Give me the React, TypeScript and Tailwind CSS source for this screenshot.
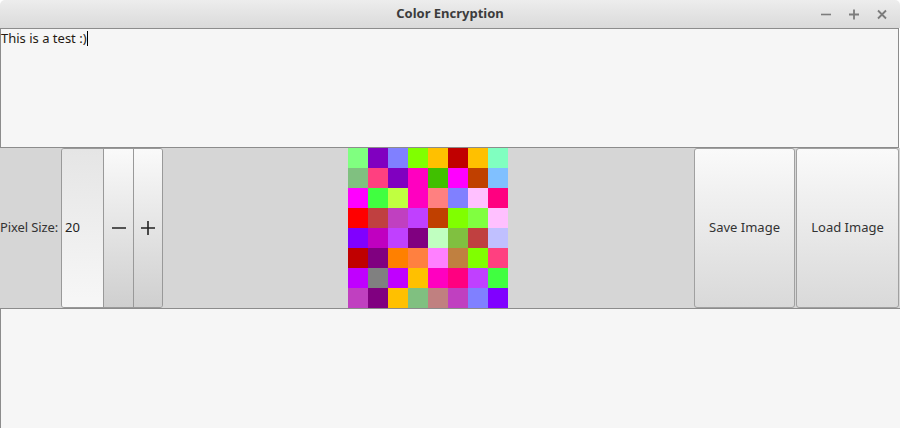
import React from "react";

const grid = [
  ["#80ff80", "#8000c0", "#8080ff", "#80ff00", "#ffc000", "#c00000", "#ffc000", "#80ffc0"],
  ["#80c080", "#ff4080", "#8000c0", "#ff00c0", "#40c000", "#ff00ff", "#c04000", "#80c0ff"],
  ["#ff00ff", "#40ff40", "#c0ff40", "#ff00c0", "#ff8080", "#8080ff", "#ffc0ff", "#ff0080"],
  ["#ff0000", "#c04040", "#c040c0", "#c040ff", "#c04000", "#80ff00", "#80ff40", "#ffc0ff"],
  ["#8000ff", "#c000c0", "#c040ff", "#800080", "#c0ffc0", "#80c040", "#c04040", "#c0c0ff"],
  ["#c00000", "#800080", "#ff8000", "#ff8040", "#ff80ff", "#c08040", "#80ff00", "#ff4080"],
  ["#c000ff", "#808080", "#c000ff", "#ffc000", "#ff00c0", "#ff0080", "#c040ff", "#40ff40"],
  ["#c040c0", "#800080", "#ffc000", "#80c080", "#c08080", "#c040c0", "#8080ff", "#8000ff"],
];

function TitleBar() {
  return <div className="relative h-[28px] shrink-0 rounded-t-[5px] bg-gradient-to-b from-[#ededed] to-[#dadada] flex items-center justify-center">
      <span className="text-[13px] font-bold text-[#3c3c3c]">Color Encryption</span>
      <div className="absolute right-[12px] top-0 h-full flex items-center gap-[16px] text-[#7c7c7c]">
        <svg width="12" height="12" viewBox="0 0 12 12"><path d="M1 6.5h10" stroke="currentColor" strokeWidth="1.6" /></svg>
        <svg width="12" height="12" viewBox="0 0 12 12"><path d="M1 6.5h10M6 1.5v10" stroke="currentColor" strokeWidth="1.8" /></svg>
        <svg width="12" height="12" viewBox="0 0 12 12"><path d="M2 2.5l8 8M10 2.5l-8 8" stroke="currentColor" strokeWidth="1.8" /></svg>
      </div>
    </div>;
}

function Button({ label }: { label: string }) {
  return <button className="w-full h-full rounded-[3px] border border-[#a0a0a0] bg-gradient-to-b from-[#fafafa] to-[#d9d9d9] text-[13px] text-[#333]">
      {label}
    </button>;
}

export default function App() {
  return <div className="w-[900px] h-[428px] bg-white flex flex-col overflow-hidden font-['Noto_Sans','Open_Sans',sans-serif]">
      <TitleBar />
      <div className="h-[120px] shrink-0 border border-[#8c8c8c] mr-[1px] bg-[#f6f6f6] pt-[1px] text-[13px] leading-[17px] text-[#241a12]">
        <span>This is a test :)</span>
        <span className="inline-block w-px h-[15px] bg-black align-[-3px]" />
      </div>
      <div className="h-[160px] shrink-0 bg-[#d6d6d6] flex">
        <div className="w-[61px] flex items-center text-[13px] tracking-[-0.1px] text-[#333]">Pixel Size:</div>
        <div className="w-[102px] flex rounded-[3px] border border-[#999] overflow-hidden">
          <div className="w-[41px] flex items-center pl-[3px] bg-gradient-to-b from-[#e5e5e5] to-[#f7f7f7] text-[13px] text-[#222]">20</div>
          <div className="w-[30px] flex items-center justify-center border-l border-[#999] bg-gradient-to-b from-[#fafafa] to-[#cfcfcf]">
            <svg width="16" height="16" viewBox="0 0 16 16"><path d="M1 8h14" stroke="#222" strokeWidth="1.6" /></svg>
          </div>
          <div className="flex-1 flex items-center justify-center border-l border-[#999] bg-gradient-to-b from-[#fafafa] to-[#cfcfcf]">
            <svg width="16" height="16" viewBox="0 0 16 16"><path d="M1 8h14M8 1v14" stroke="#222" strokeWidth="1.6" /></svg>
          </div>
        </div>
        <div className="flex-1 flex items-center justify-center pr-[1px]">
          <div className="grid grid-cols-8">
            {grid.flat().map((c, i) => <div key={i} className="w-[20px] h-[20px]" style={{ backgroundColor: c }} />)}
          </div>
        </div>
        <div className="w-[206px] flex gap-[1px] pr-[1px]">
          <div className="w-[101px]"><Button label="Save Image" /></div>
          <div className="flex-1"><Button label="Load Image" /></div>
        </div>
      </div>
      <div className="flex-1 border-t border-l border-[#8c8c8c] bg-[#f6f6f6]" />
    </div>;
}
